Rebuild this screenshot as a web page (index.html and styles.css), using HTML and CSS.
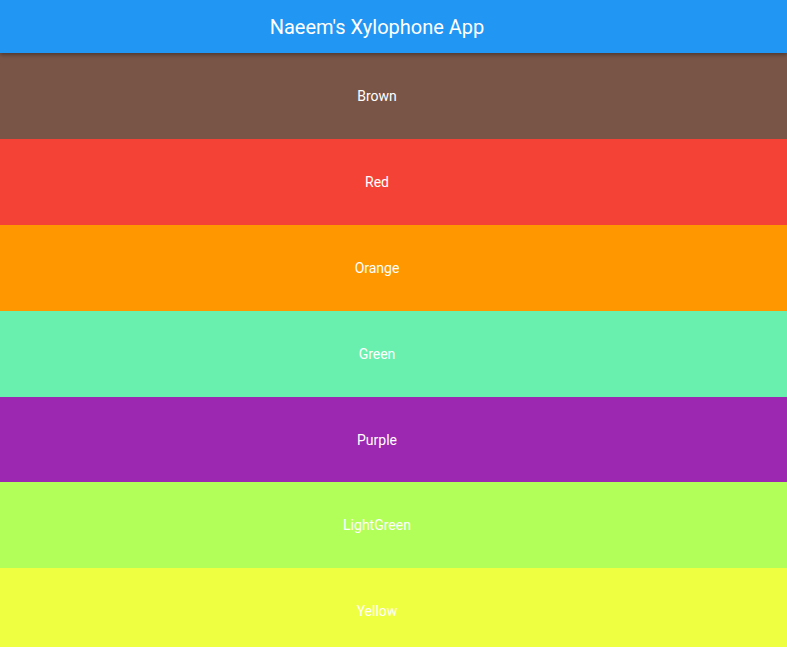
FILE: index.html
```html
<!DOCTYPE html>
<html lang="en">
<head>
<meta charset="utf-8">
<title>Naeem's Xylophone App</title>
<link rel="stylesheet" href="styles.css">
</head>
<body>
<div class="app">
  <header class="appbar"><span class="title">Naeem's Xylophone App</span></header>
  <main class="keys">
    <button class="key brown">Brown</button>
    <button class="key red">Red</button>
    <button class="key orange">Orange</button>
    <button class="key green">Green</button>
    <button class="key purple">Purple</button>
    <button class="key lightgreen">LightGreen</button>
    <button class="key yellow">Yellow</button>
  </main>
</div>
</body>
</html>
```
FILE: styles.css
```css
html, body {
  margin: 0;
  padding: 0;
  height: 100%;
  overflow: hidden;
  font-family: Roboto, "Liberation Sans", sans-serif;
}
.app {
  display: flex;
  flex-direction: column;
  height: 100%;
}
.appbar {
  position: relative;
  z-index: 2;
  height: 53px;
  flex: none;
  background: #2196F3;
  color: #fff;
  display: flex;
  align-items: center;
  justify-content: center;
  padding-right: 33px;
  box-shadow: 0 2px 4px rgba(0,0,0,0.35);
}
.title {
  font-size: 20px;
  font-weight: 400;
}
.keys {
  display: flex;
  flex-direction: column;
  flex: none;
}
.key {
  height: 85.9px;
  flex: none;
  border: 0;
  margin: 0;
  padding: 0 33px 0 0;
  color: #fff;
  font-family: Roboto, "Liberation Sans", sans-serif;
  font-size: 14px;
  display: flex;
  align-items: center;
  justify-content: center;
}
.brown { background: #795548; }
.red { background: #F44336; }
.orange { background: #FF9800; }
.green { background: #69F0AE; }
.purple { background: #9C27B0; }
.lightgreen { background: #B2FF59; }
.yellow { background: #EEFF41; }
```
